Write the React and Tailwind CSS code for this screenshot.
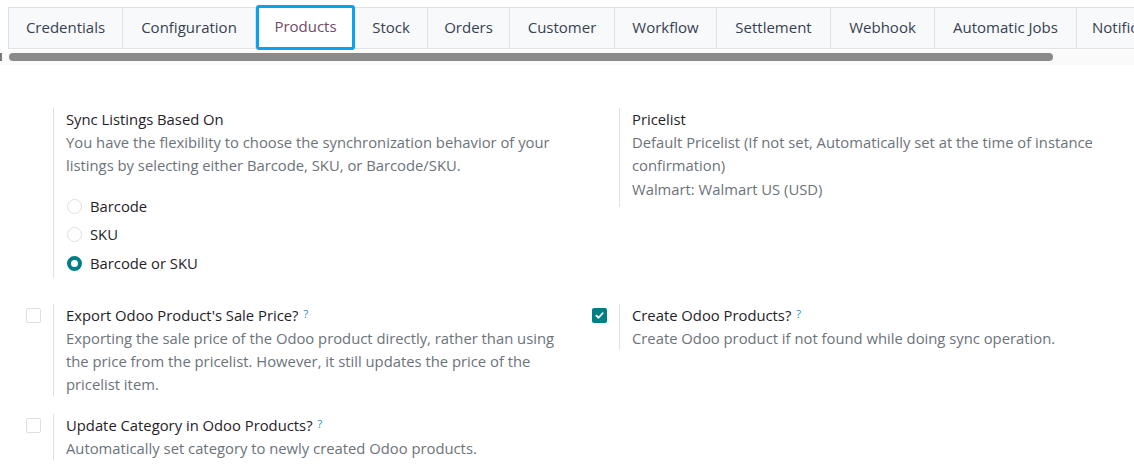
import React from "react";

const tabs = [
  ["Credentials", 115],
  ["Configuration", 133],
  ["Products", 99],
  ["Stock", 73],
  ["Orders", 82],
  ["Customer", 105],
  ["Workflow", 102],
  ["Settlement", 114],
  ["Webhook", 104],
  ["Automatic Jobs", 142],
  ["Notifications", 130],
];

const widthClass = {
  115: "w-[115px]",
  133: "w-[133px]",
  99: "w-[99px]",
  73: "w-[73px]",
  82: "w-[82px]",
  105: "w-[105px]",
  102: "w-[102px]",
  114: "w-[114px]",
  104: "w-[104px]",
  142: "w-[142px]",
  130: "w-[130px]",
};

function Help() {
  return <sup className="ml-[5px] text-[11px] text-[#1a8fb8] relative -top-[3px]">?</sup>;
}

function Checkbox({ checked }) {
  if (checked) {
    return (
      <div className="w-[15px] h-[15px] rounded-[2px] bg-[#017e84] flex items-center justify-center">
        <svg width="9" height="9" viewBox="0 0 10 10">
          <path d="M1.5 5.2 L4 7.5 L8.5 2.5" fill="none" stroke="white" strokeWidth="2" strokeLinecap="round" strokeLinejoin="round" />
        </svg>
      </div>
    );
  }
  return <div className="w-[15px] h-[15px] rounded-[2px] border border-[#dcdfe3] bg-white" />;
}

function Radio({ checked, label }) {
  return (
    <div className="flex items-center h-[28.5px]">
      {checked ? (
        <div className="w-[15px] h-[15px] rounded-full border-[4px] border-[#017e84] bg-white ml-[1px]" />
      ) : (
        <div className="w-[15px] h-[15px] rounded-full border border-[#dcdfe3] bg-white ml-[1px]" />
      )}
      <span className="ml-[8px] text-[#1f2328]">{label}</span>
    </div>
  );
}

function SettingBox({ check, children, className = "" }) {
  return (
    <div className={"flex " + className}>
      <div className="w-[39px] shrink-0 pl-[12px] pt-[4px]">
        {check !== undefined ? <Checkbox checked={check} /> : null}
      </div>
      <div className="border-l border-[#dee2e6] pl-[12px] leading-[23px] whitespace-nowrap">{children}</div>
    </div>
  );
}

const Title = ({ children }) => <div className="text-[#1f2328]">{children}</div>;
const Desc = ({ children }) => <div className="text-[#6c737a]">{children}</div>;

export default function App() {
  return (
    <div
      className="w-[1134px] h-[465px] bg-white overflow-hidden text-[14.8px]"
      style={{ fontFamily: '"Open Sans", sans-serif' }}
    >
      <div className="pt-[7px] pl-[8px] flex items-start whitespace-nowrap">
        {tabs.map(([name, w], i) =>
          name === "Products" ? (
            <div
              key={name}
              className={
                widthClass[w] +
                " shrink-0 h-[45px] -mt-[2px] border-[3px] border-[#0aa0f5] rounded-[3px] bg-white flex items-center justify-center pb-[2px] text-[#714b67] text-[15px]"
              }
            >
              {name}
            </div>
          ) : (
            <div
              key={name}
              className={
                widthClass[w] +
                " shrink-0 h-[42px] border-y border-r border-[#dee2e6] bg-[#f8f9fa] flex items-center justify-center pb-[2px] text-[#374151] text-[15px] " +
                (i === 0 ? "border-l" : "") +
                (i === tabs.length - 1 ? " justify-start pl-[15px]" : "")
              }
            >
              {name}
            </div>
          )
        )}
      </div>
      <div className="h-[15px] flex items-start pt-[3px] bg-[#fafafa]">
        <div className="w-[2px] h-[8px] bg-[#777]" />
        <div className="ml-[7px] w-[1044px] h-[8px] rounded-full bg-[#8a8a8a]" />
      </div>

      <div className="pl-[14px] pt-[43px] grid grid-cols-[566px_566px]">
        <SettingBox className="pb-[2px]">
          <Title>Sync Listings Based On</Title>
          <Desc>
            You have the flexibility to choose the synchronization behavior of your
            <br />
            listings by selecting either Barcode, SKU, or Barcode/SKU.
          </Desc>
          <div className="mt-[15px]">
            <Radio label="Barcode" />
            <Radio label="SKU" />
            <Radio label="Barcode or SKU" checked />
          </div>
        </SettingBox>
        <div className="self-start">
          <SettingBox>
            <Title>Pricelist</Title>
            <Desc>
              Default Pricelist (If not set, Automatically set at the time of instance
              <br />
              confirmation)
            </Desc>
            <div className="pt-[1px] pb-[6px] text-[#6c737a]">Walmart: Walmart US (USD)</div>
          </SettingBox>
        </div>

        <SettingBox check={false} className="mt-[24px]">
          <Title>
            Export Odoo Product's Sale Price?
            <Help />
          </Title>
          <Desc>
            Exporting the sale price of the Odoo product directly, rather than using
            <br />
            the price from the pricelist. However, it still updates the price of the
            <br />
            pricelist item.
          </Desc>
        </SettingBox>
        <div className="mt-[24px] self-start">
          <SettingBox check={true}>
            <Title>
              Create Odoo Products?
              <Help />
            </Title>
            <Desc>Create Odoo product if not found while doing sync operation.</Desc>
          </SettingBox>
        </div>

        <SettingBox check={false} className="mt-[18px]">
          <Title>
            Update Category in Odoo Products?
            <Help />
          </Title>
          <Desc>Automatically set category to newly created Odoo products.</Desc>
        </SettingBox>
        <div />
      </div>
    </div>
  );
}
